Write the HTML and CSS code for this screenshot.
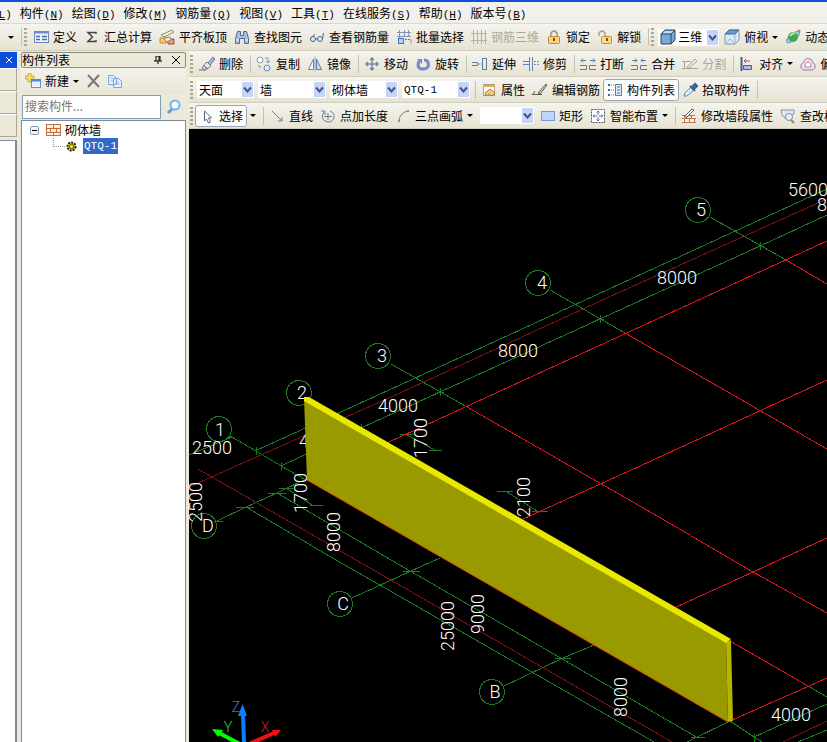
FILE: index.html
```
<!DOCTYPE html>
<html lang="zh-CN">
<head>
    <meta charset="UTF-8">
    <meta name="viewport" content="width=device-width, initial-scale=1.0">
    <title>构件列表</title>
    <link rel="stylesheet" href="styles.css">
</head>
<body>

<nav class="menubar">
    <button class="menu"><span class="key">(<u>L</u>)</span></button>
    <button class="menu">构件<span class="key">(<u>N</u>)</span></button>
    <button class="menu">绘图<span class="key">(<u>D</u>)</span></button>
    <button class="menu">修改<span class="key">(<u>M</u>)</span></button>
    <button class="menu">钢筋量<span class="key">(<u>Q</u>)</span></button>
    <button class="menu">视图<span class="key">(<u>V</u>)</span></button>
    <button class="menu">工具<span class="key">(<u>T</u>)</span></button>
    <button class="menu">在线服务<span class="key">(<u>S</u>)</span></button>
    <button class="menu">帮助<span class="key">(<u>H</u>)</span></button>
    <button class="menu">版本号<span class="key">(<u>B</u>)</span></button>
</nav>

<div class="toolbar main-bar">
    <button class="tool more" aria-label="更多"><span class="caret"></span></button>
    <span class="sep"></span>
    <span class="grip"></span>
    <button class="tool"><svg class="icon" viewBox="0 0 16 16"><rect x="1.500" y="2.500" width="14" height="11" fill="#eef3fc" stroke="#6c87b8"/><path d="M1 3.500h15" stroke="#6f8fcb" stroke-width="2"/><path d="M3 7.500h4M3 10.500h4M9 7.500h5M9 10.500h5" stroke="#4d6ea8" stroke-width="1.500"/></svg>定义</button>
    <button class="tool"><svg class="icon" viewBox="0 0 16 16"><path d="M12 5V3.500H4l4.500 4.500L4 12.500h8V11" fill="none" stroke="#444" stroke-width="1.500"/></svg>汇总计算</button>
    <button class="tool"><svg class="icon" viewBox="0 0 16 16"><path d="M2 6l11-5 2 2-10 5z" fill="#fff3c4" stroke="#8f8a78"/><path d="M1 9h6v5H1z" fill="#f5c96b" stroke="#c78a35"/><path d="M9 10h6v5H9z" fill="#e2a07c" stroke="#b4432f"/><path d="M5 9l6-1 1 3-5 2z" fill="#f7e7ba" stroke="#888"/></svg>平齐板顶</button>
    <button class="tool"><svg class="icon" viewBox="0 0 16 16"><path d="M3.500 2.500h3v4h3v-4h3l2 7v5h-4v-5h-5v5h-4v-5z" fill="#a9bfe2" stroke="#4a689d"/><path d="M2 11h3M11 11h3" stroke="#fff"/></svg>查找图元</button>
    <button class="tool"><svg class="icon" viewBox="0 0 16 16"><circle cx="4" cy="10" r="2.500" fill="#dce8f5" stroke="#51657f"/><circle cx="11" cy="10" r="2.500" fill="#dce8f5" stroke="#51657f"/><path d="M6.500 10h2M2 9l4-4M13.500 10l1-6" fill="none" stroke="#51657f"/></svg>查看钢筋量</button>
    <button class="tool"><svg class="icon" viewBox="0 0 16 16"><path d="M1 3.500h14M1 7.500h14M3.500 1v14M8.500 1v7" stroke="#8395b2"/><path d="M12.500 1v6" stroke="#8395b2"/><path d="M9 10.500h6v4" fill="none" stroke="#777" stroke-dasharray="2 1"/><rect x="2.500" y="9.500" width="5" height="5" fill="#b9d3f7" stroke="#3e70bd"/></svg>批量选择</button>
    <button class="tool off" disabled><svg class="icon" viewBox="0 0 16 16"><path d="M0 4.500h16M0 11.500h16M2.500 1v14M6.500 1v14M10.500 1v14M14.500 1v14" stroke="#b5b2a5"/></svg>钢筋三维</button>
    <button class="tool"><svg class="icon" viewBox="0 0 16 16"><path d="M5 7V4q3-4 6 0v3" fill="none" stroke="#9c9480" stroke-width="1.500"/><rect x="2.500" y="7.500" width="11" height="7" rx="1" fill="#fbd27b" stroke="#bf8c32"/><path d="M8 9v3" stroke="#76531b" stroke-width="2"/></svg>锁定</button>
    <button class="tool"><svg class="icon" viewBox="0 0 16 16"><path d="M2 7V4q3-4 6 0v3" fill="none" stroke="#aaa087" stroke-width="1.500"/><rect x="4.500" y="7.500" width="10" height="7" rx="1" fill="#fbd98d" stroke="#bf8c32"/><path d="M10 9v3" stroke="#76531b" stroke-width="2"/></svg>解锁</button>
    <span class="sep"></span>
    <span class="grip"></span>
    <span class="combo view-combo">
        <svg class="icon" viewBox="0 0 16 16"><path d="M1 5l4-4h10v10l-4 4H1z" fill="#79abd9" stroke="#28435f"/><path d="M2 5l3-3h9l-3 3z" fill="#bddcf5"/><path d="M1 5h10v10M11 5l4-4" fill="none" stroke="#28435f"/></svg>
        <select aria-label="视图"><option>三维</option></select>
        <svg class="drop" viewBox="0 0 11 14"><path d="M2 5l3.500 4L9 5" /></svg>
    </span>
    <button class="tool"><svg class="icon" viewBox="0 0 16 16"><path d="M1 5l4-4h10v10l-4 4H1z" fill="#dbe9f5" stroke="#8298ae"/><path d="M1 5l4-4h10l-4 4z" fill="#5d9bd1" stroke="#426a91"/><path d="M11 5v10M1 15l5-5 5 5" fill="none" stroke="#9bb1c5"/></svg>俯视<span class="caret"></span></button>
    <button class="tool"><svg class="icon" viewBox="0 0 16 16"><ellipse cx="8" cy="8" rx="8" ry="3" transform="rotate(-40 8 8)" fill="#a7d4ef" stroke="#6b9fc5"/><circle cx="8" cy="8" r="5" fill="#43a64d"/><path d="M5 7q3-4 5-2" stroke="#b2edac" fill="none" stroke-width="2"/><circle cx="14" cy="2" r="1.500" fill="#de7548"/></svg>动态观察</button>
</div>

<div class="workspace">
    <aside class="side-strip">
        <div class="strip-title"><button aria-label="关闭导航"><svg viewBox="0 0 8 8"><path d="M1 1l6 6M7 1l-6 6" stroke="#fff"/></svg></button></div>
        <div class="strip-item"></div>
        <div class="strip-item"></div>
        <div class="strip-item"></div>
        <div class="strip-body"></div>
    </aside>

    <aside class="panel">
        <header class="panel-title">
            <h1>构件列表</h1>
            <button aria-label="固定"><svg viewBox="0 0 8 8"><path d="M2 0h4v5M2 0v5M0 5h8M4 5v3" fill="none" stroke="#000"/><path d="M5 0v5" stroke="#000"/></svg></button>
            <button aria-label="关闭"><svg viewBox="0 0 8 8"><path d="M0 0l8 8M8 0l-8 8" stroke="#000"/></svg></button>
        </header>
        <div class="panel-tools">
            <button class="tool"><svg class="icon" viewBox="0 0 16 16"><rect x="6.500" y="6.500" width="9" height="8" fill="#eaf1fd" stroke="#6d8cc2"/><path d="M6 7.500h10" stroke="#5585d6" stroke-width="2"/><path d="M3 0h3v3h3v3H6v3H3V6H0V3h3z" fill="#f6df62" stroke="#b29a39" stroke-width=".7"/></svg>新建<span class="caret"></span></button>
            <button class="tool" aria-label="删除构件"><svg class="icon" viewBox="0 0 16 16"><path d="M3 2l11 12M14 2L3 14" stroke="#777" stroke-width="2"/></svg></button>
            <button class="tool" aria-label="复制构件"><svg class="icon" viewBox="0 0 16 16"><path d="M1.500 2.500h5l3 3v6h-8zM6.500 5.500h5l3 3v6h-8z" fill="#e9f2ff" stroke="#7ca2d8"/><path d="M8 9h4M8 11h5M3 5h3M3 8h3" stroke="#9abae7"/></svg></button>
        </div>
        <div class="search">
            <input type="text" placeholder="搜索构件..." aria-label="搜索构件">
            <button aria-label="搜索"><svg class="icon" viewBox="0 0 16 16"><path d="M6 10l-4 4" stroke="#609edc" stroke-width="3"/><circle cx="9" cy="6" r="4.500" fill="#f6fcff" stroke="#70b6ed" stroke-width="2"/></svg></button>
        </div>
        <div class="tree">
            <div class="node">
                <svg class="box" viewBox="0 0 9 9"><rect x=".5" y=".5" width="8" height="8" rx="1" fill="#f5f3ed" stroke="#7b98b5"/><path d="M2 4.500h5" stroke="#000"/></svg>
                <svg class="icon" viewBox="0 0 16 16"><rect x="1" y="2" width="15" height="12" fill="#fff0dc"/><path d="M1 2.500h15M1 6.500h15M1 10.500h15M1 13.500h15M1.500 2v12M8.500 2v4M5.500 6v4M11.500 6v4M8.500 10v4M15.500 2v12" stroke="#c66d3e"/></svg>
                <span>砌体墙</span>
            </div>
            <div class="node child">
                <span class="branch"></span>
                <svg class="gear" viewBox="0 0 11 11"><circle cx="5.500" cy="5.500" r="4" fill="#f5df20" stroke="#222" stroke-width="2" stroke-dasharray="2 1"/><circle cx="5.500" cy="5.500" r="2" fill="#ffef45" stroke="#4d4300"/></svg>
                <span class="picked">QTQ-1</span>
            </div>
        </div>
    </aside>

    <main class="work">
        <div class="toolbar">
            <span class="grip"></span>
            <button class="tool"><svg class="icon" viewBox="0 0 16 16"><path d="M9 7l5-6 2 2-5 6z" fill="#adb9d8" stroke="#687798"/><path d="M5 9l3-3 4 4-4 3q-4 1-5-1z" fill="#e9e6ec" stroke="#86758e"/><path d="M5 10l4 3" stroke="#9c3945"/><path d="M0 14h7" stroke="#666"/></svg>删除</button>
            <span class="sep"></span>
            <button class="tool"><svg class="icon" viewBox="0 0 16 16"><circle cx="4" cy="4" r="3" fill="#f7f9fb" stroke="#8997aa"/><circle cx="11" cy="12" r="3" fill="#dce8fa" stroke="#6f8dbc"/><path d="M9 2h3v4M10 5l2 2 2-2M3 9v2h2" fill="none" stroke="#8494ad"/></svg>复制</button>
            <button class="tool"><svg class="icon" viewBox="0 0 16 16"><path d="M1.500 13.500L6.500 3v10.500z" fill="#f5f7fa" stroke="#7187a6"/><path d="M9.500 3v10.500h5z" fill="#c9dbf4" stroke="#587bac"/><path d="M8 1v14" stroke="#89a"/></svg>镜像</button>
            <span class="sep"></span>
            <button class="tool"><svg class="icon" viewBox="0 0 16 16"><path d="M8 2v12M2 8h12M6 4l2-2 2 2M6 12l2 2 2-2M4 6L2 8l2 2M12 6l2 2-2 2" fill="none" stroke="#7387a2" stroke-width="1.500"/></svg>移动</button>
            <button class="tool"><svg class="icon" viewBox="0 0 16 16"><path d="M4 5q-3 8 4 8 7 0 5-7-1-2-4-2" fill="none" stroke="#7289d0" stroke-width="3"/><path d="M2 3h5v5z" fill="#7289d0"/></svg>旋转</button>
            <span class="sep"></span>
            <button class="tool"><svg class="icon" viewBox="0 0 16 16"><path d="M0 6.500h5.500v3H0M10.500 2v12M14.500 2v12M10 2.500h5M10 13.500h5" fill="none" stroke="#5f7ea9"/><path d="M6 8h4" stroke="#6b91cd" stroke-dasharray="2 1"/></svg>延伸</button>
            <button class="tool"><svg class="icon" viewBox="0 0 16 16"><path d="M0 5.500h6M0 8.500h6M6.500 1v14M9.500 1v14" stroke="#5f84b8"/><path d="M11 5.500h5M11 8.500h5" stroke="#88a" stroke-dasharray="2 1"/></svg>修剪</button>
            <span class="sep"></span>
            <button class="tool"><svg class="icon" viewBox="0 0 16 16"><path d="M1 4.500h5M3 2.500l-2 2 2 2M10 4.500h5M13 2.500l2 2-2 2M0 9.500h6.500v4H0M16 9.500H9.500v4H16" fill="none" stroke="#617aa1"/></svg>打断</button>
            <button class="tool"><svg class="icon" viewBox="0 0 16 16"><path d="M1 4.500h5M4 2.500l2 2-2 2M10 4.500h5M12 2.500l-2 2 2 2M0 9.500h6.500v4H0M16 9.500H9.500v4H16" fill="none" stroke="#617aa1"/></svg>合并</button>
            <button class="tool off" disabled><svg class="icon" viewBox="0 0 16 16"><path d="M0 5.500h9M0 12.500h16M5 11l8-8 2 2-8 7zM2.500 6v6" fill="none" stroke="#aaa799"/></svg>分割</button>
            <span class="sep"></span>
            <button class="tool"><svg class="icon" viewBox="0 0 16 16"><path d="M2.500 1v14" stroke="#455f96" stroke-width="2"/><path d="M4.500 9.500h8v4h-8z" stroke="#455f96" fill="#a9bce5"/><path d="M5 5h6M7 3L5 5l2 2" fill="none" stroke="#b9475f"/></svg>对齐<span class="caret"></span></button>
            <button class="tool"><svg class="icon" viewBox="0 0 16 16"><path d="M4 6q1-5 6-3 3 1 3 4 3 1 2 5-1 2-4 2H4q-4-1-3-5 1-2 3-3z" fill="#f2e0e6" stroke="#8d7eae"/><path d="M5 11q0-5 3-5t3 5z" fill="#fff" stroke="#ca7285"/></svg>偏移</button>
        </div>

        <div class="toolbar">
            <span class="grip"></span>
            <div class="combos">
                <span class="combo narrow"><select aria-label="楼层"><option>天面</option></select><svg class="drop" viewBox="0 0 11 14"><path d="M2 5l3.500 4L9 5"/></svg></span>
                <span class="combo"><select aria-label="构件类型"><option>墙</option></select><svg class="drop" viewBox="0 0 11 14"><path d="M2 5l3.500 4L9 5"/></svg></span>
                <span class="combo"><select aria-label="构件种类"><option>砌体墙</option></select><svg class="drop" viewBox="0 0 11 14"><path d="M2 5l3.500 4L9 5"/></svg></span>
                <span class="combo"><select class="code" aria-label="构件名称"><option>QTQ-1</option></select><svg class="drop" viewBox="0 0 11 14"><path d="M2 5l3.500 4L9 5"/></svg></span>
            </div>
            <span class="sep"></span>
            <button class="tool"><svg class="icon" viewBox="0 0 16 16"><rect x="2.500" y="2.500" width="11" height="11" fill="#fff" stroke="#aaa18c"/><path d="M2 4h12" stroke="#e5ac4d" stroke-width="2"/><path d="M4 11l5-4 5 4-3 3-3-2-3 2z" fill="#f6cf82" stroke="#a67b35"/></svg>属性</button>
            <button class="tool"><svg class="icon" viewBox="0 0 16 16"><path d="M0 12.500h10M6 11l8-9 1 1-7 9z" fill="#d4cbb5" stroke="#645c4d"/><path d="M3 9l-2 3" fill="none" stroke="#645c4d"/></svg>编辑钢筋</button>
            <button class="tool pressed"><svg class="icon" viewBox="0 0 16 16"><path d="M1 3h2M1 8h2M1 13h2" stroke="#3865a6" stroke-width="2"/><path d="M4 3h4M4 8h3M4 13h4" stroke="#777" stroke-dasharray="1 1"/><rect x="8.500" y="2.500" width="6" height="11" fill="#e4eefb" stroke="#5a7fb8"/><path d="M10 5h3M10 8h3M10 11h3" stroke="#496b9d"/></svg>构件列表</button>
            <button class="tool"><svg class="icon" viewBox="0 0 16 16"><path d="M2 14l1-3 6-6 3 3-7 6z" fill="#d9ecfa" stroke="#6489ae"/><path d="M8 4l5 5M10 5l3-3 2 2-3 3z" stroke="#355f95" stroke-width="2" fill="#517fb9"/></svg>拾取构件</button>
            <span class="sep"></span>
        </div>

        <div class="toolbar">
            <span class="grip"></span>
            <button class="tool pressed"><svg class="icon" viewBox="0 0 16 16"><path d="M5.500 3v10l2-2 2 4 2-1-2-4h3z" fill="#fff" stroke="#596579"/></svg>选择</button>
            <button class="tool" aria-label="选择方式"><span class="caret"></span></button>
            <span class="sep"></span>
            <button class="tool"><svg class="icon" viewBox="0 0 16 16"><path d="M3 3l10 10M13 9v4H9" fill="none" stroke="#6680a1"/></svg>直线</button>
            <button class="tool"><svg class="icon" viewBox="0 0 16 16"><path d="M4 4q-4 6 1 9 6 3 9-3 1-5-4-7M1 3h4v4M8 5v7M4 8.500h8" fill="none" stroke="#6c7d91"/></svg>点加长度</button>
            <button class="tool"><svg class="icon" viewBox="0 0 16 16"><path d="M4 14q0-10 10-11" fill="none" stroke="#a57068"/><path d="M3 13h2M12 3h2" stroke="#b98078" stroke-width="2"/></svg>三点画弧<span class="caret"></span></button>
            <span class="combo empty"><select aria-label="画弧方式"><option></option></select><svg class="drop" viewBox="0 0 11 14"><path d="M2 5l3.500 4L9 5"/></svg></span>
            <button class="tool"><svg class="icon" viewBox="0 0 16 16"><rect x="2.500" y="3.500" width="13" height="9" fill="#bfd5fb" stroke="#7998cf"/></svg>矩形</button>
            <button class="tool"><svg class="icon" viewBox="0 0 16 16"><rect x="1.500" y="1.500" width="13" height="13" fill="#fff" stroke="#555" stroke-dasharray="2 1"/><path d="M8 3v4M8 9v4M3 8h4M9 8h4M6.500 4.500L8 3l1.500 1.500M6.500 11.500L8 13l1.500-1.500M4.500 6.500L3 8l1.500 1.500M11.500 6.500L13 8l-1.500 1.500" fill="none" stroke="#587398"/></svg>智能布置<span class="caret"></span></button>
            <span class="sep"></span>
            <button class="tool"><svg class="icon" viewBox="0 0 16 16"><path d="M1 7h13v8H1z" fill="#fff1dc"/><path d="M1 7.500h13M1 10.500h14M1 14.500h14M5.500 7v3M10.500 7v3M3.500 11v3M8.500 11v3M13.500 11v3" stroke="#c17857"/><path d="M3 9l8-8 2 1-7 7z" fill="#fff" stroke="#665f58"/></svg>修改墙段属性</button>
            <button class="tool"><svg class="icon" viewBox="0 0 16 16"><path d="M1 2h13v4l-4 1-4 4-4-4z" fill="#e3e8ef" stroke="#8393aa"/><circle cx="9" cy="9" r="3.500" fill="#e7f4ff" stroke="#6e8db3"/><path d="M11 12l3 3" stroke="#ad8151" stroke-width="2"/></svg>查改标注</button>
        </div>

        <svg class="scene" viewBox="189 129 638 613" preserveAspectRatio="xMinYMin slice">
            <!-- outer dimension frame -->
            <g class="faint">
                <path d="M189 487L400 393L620 292L827 199"/>
                <path d="M198 469L356 560L509 648L672 742M783 742L827 721"/>
            </g>
            <g class="axis">
                <path d="M255 451L400 385L620 284L827 189M189 455L232 437"/>
                <path d="M281 466L361 428L440 392L600 319L760 246L827 215"/>
                <path d="M246 507L336 560L509 659L654 742M798 742L827 730"/>
                <path d="M277 493L391 560L509 628L698 738M754 737L827 704"/>
                <path d="M710 217L786 260M550 290L625 333M391 364L467 407M311 400L390 445M230 436L256 451L281 466L306 480"/>
                <path d="M217 521L246 507L277 493L310 477M352 598L411 571L440 558M504 686L563 658L594 645M687 742L728 722M730 721L754 737L762 742M808 686L827 697"/>
                <path d="M236 507.500h18M268 493.500h18M279 488.500h14M403 571.500h17M555 658.500h16M691 737.500h14M214 521.500h9"/>
                <path d="M286 488L312 505M310 505.500h13M400 434.500h13M407 435L435 450M429 450.500h13M497 491.500h16M507 492L537 511M532 511.500h16"/>
                <path d="M760.500 242v8M757 246.500h7M600.500 315v8M597 319.500h7M440.500 388v8M437 392.500h7M361.500 424v8M256.500 447v8M281.500 462v8M754.500 734v8"/>
                <circle cx="698" cy="210" r="12.500"/>
                <circle cx="538" cy="283" r="12.500"/>
                <circle cx="378" cy="356" r="12.500"/>
                <circle cx="299" cy="393" r="12.500"/>
                <circle cx="219" cy="429" r="12.500"/>
                <circle cx="204" cy="526" r="12.500"/>
                <circle cx="340" cy="604" r="12.500"/>
                <circle cx="492" cy="692" r="12.500"/>
            </g>
            <g class="grid">
                <path d="M306 480L389 442L655 320L827 241M523 519L640 466L827 380M674 608L753 572L827 538M730 721L827 678"/>
                <path d="M786 260L827 284M625 333L827 449M467 407L640 506L753 572L827 613M730 641L808 686"/>
            </g>
            <g class="label">
                <text x="701" y="216">5</text>
                <text x="542" y="289">4</text>
                <text x="382" y="362">3</text>
                <text x="302" y="399">2</text>
                <text x="220" y="436">1</text>
                <text x="208" y="532">D</text>
                <text x="343" y="610">C</text>
                <text x="495" y="698">B</text>
                <text x="808" y="196">5600</text>
                <text x="837" y="211">8000</text>
                <text x="677" y="284">8000</text>
                <text x="518" y="357">8000</text>
                <text x="398" y="412">4000</text>
                <text x="319" y="447">4000</text>
                <text x="212" y="454">2500</text>
                <text x="791" y="721">4000</text>
                <text transform="translate(202 502) rotate(-90)">2500</text>
                <text transform="translate(307 493) rotate(-90)">1700</text>
                <text transform="translate(340 532) rotate(-90)">8000</text>
                <text transform="translate(427 438) rotate(-90)">1700</text>
                <text transform="translate(530 497) rotate(-90)">2100</text>
                <text transform="translate(454 626) rotate(-90)">25000</text>
                <text transform="translate(484 614) rotate(-90)">9000</text>
                <text transform="translate(627 697) rotate(-90)">8000</text>
            </g>
            <!-- wall QTQ-1 -->
            <path d="M304 398L307 480L728 722L726 641z" fill="#999900"/>
            <path d="M307 480L728 722" stroke="#dc4a00"/>
            <path d="M726 642L731 640L733 721L728 722z" fill="#b5b500"/>
            <path d="M304 397H309L731 639L726 643L304 401z" fill="#e8e800"/>
            <!-- coordinate tripod -->
            <g stroke-width="4">
                <path d="M244 742L243 714" stroke="#0a80ff"/>
                <path d="M238 716L242.500 704L247 716z" fill="#0a80ff"/>
                <path d="M240 744L219 733" stroke="#0f0"/>
                <path d="M212 729L223 730L218 737z" fill="#0f0"/>
                <path d="M249 744L274 733" stroke="#f01010"/>
                <path d="M281 730L272 730L275 737z" fill="#f01010"/>
            </g>
            <g class="tripod">
                <text x="236" y="712" fill="#2d7fe0">Z</text>
                <text x="228" y="732" fill="#35d835">Y</text>
                <text x="265" y="732" fill="#d02020">X</text>
            </g>
        </svg>
    </main>
</div>

</body>
</html>
```
FILE: styles.css
```
* {
    box-sizing: border-box;
}

body {
    margin: 0;
    height: 100vh;
    overflow: hidden;
    display: flex;
    flex-direction: column;
    font-family: "Noto Sans CJK SC", sans-serif;
    font-size: 12px;
    line-height: 16px;
    color: #000;
    background-color: #ece9d8;
    border-top: 2px solid #0a50dc;
}

button, input, select {
    font: inherit;
    color: inherit;
    margin: 0;
    padding: 0;
    border: 0;
    background: none;
}

button {
    white-space: nowrap;
}

/* menu */
.menubar {
    flex: none;
    height: 22px;
    display: flex;
    align-items: center;
    gap: 8px;
    margin-left: -8px;
    padding: 2px 8px 0 0;
    background-color: #f1f0ea;
    border-bottom: 1px solid #dcd8c8;
}

.key {
    font-family: "Liberation Mono", monospace;
    font-size: 11px;
}

/* toolbars */
.toolbar {
    flex: none;
    height: 26px;
    display: flex;
    align-items: center;
    gap: 7px;
    padding-left: 1px;
    overflow: hidden;
    background: linear-gradient(#f5f4ee, #e6e3d3);
    border-bottom: 1px solid #d3cfbf;
}

.main-bar {
    height: 27px;
}

.toolbar > * {
    flex: none;
}

.tool {
    display: flex;
    align-items: center;
    gap: 4px;
}

.icon {
    flex: none;
    width: 16px;
    height: 16px;
}

.off {
    color: #aca899;
}

.pressed {
    height: 22px;
    margin: 0 -4px;
    padding: 0 3px;
    background-color: #fcfcfb;
    border: 1px solid #98a6ba;
    border-radius: 3px;
}

.caret {
    border: 3px solid transparent;
    border-top-color: #000;
    border-bottom: 0;
}

.more {
    padding-left: 7px;
}

.sep {
    width: 1px;
    height: 18px;
    margin-right: -2px;
    background-color: #c5c2b3;
}

.grip {
    width: 3px;
    height: 18px;
    margin-right: -1px;
    background: repeating-linear-gradient(#aaa793 0 2px, transparent 2px 4px);
}

.main-bar .sep {
    margin-right: -5px;
}

.combos {
    display: flex;
    gap: 4px;
    margin: 0 -2px 0 -2px;
}

.combo {
    position: relative;
    width: 68px;
    height: 17px;
    display: flex;
    align-items: center;
    background-color: #fff;
}

.narrow {
    width: 57px;
}

.empty {
    width: 54px;
    margin-right: -2px;
}

.view-combo {
    width: 61px;
    padding-left: 2px;
    margin: 0 -2px;
}

.combo select {
    flex: 1;
    min-width: 0;
    height: 17px;
    line-height: 16px;
    padding-left: 2px;
    appearance: none;
    outline: 0;
}

.combo .code {
    font-family: "Liberation Mono", monospace;
    font-size: 11px;
}

.drop {
    position: absolute;
    right: 1px;
    top: 1px;
    width: 11px;
    height: 15px;
    background-color: #c3d3fa;
    border-radius: 1px;
    pointer-events: none;
}

.drop path {
    fill: none;
    stroke: #42567c;
    stroke-width: 2;
}

/* workspace */
.workspace {
    flex: 1;
    min-height: 0;
    display: flex;
}

.side-strip {
    flex: none;
    width: 17px;
    margin-right: 4px;
    display: flex;
    flex-direction: column;
}

.strip-title {
    height: 16px;
    margin-top: 1px;
    display: flex;
    justify-content: center;
    align-items: center;
    background-color: #0a50dc;
}

.strip-title button {
    display: flex;
}

.strip-title svg, .panel-title svg {
    width: 8px;
    height: 8px;
}

.strip-item {
    height: 23px;
    background-color: #ece9d8;
    border: 1px solid #aaa798;
    border-top-color: #fff;
    border-left: 0;
}

.strip-body {
    flex: 1;
    margin-top: 3px;
    background-color: #fff;
    border: 1px solid #7f8d9b;
    border-width: 1px 2px 0 0;
}

.panel {
    flex: none;
    width: 165px;
    margin-right: 3px;
    display: flex;
    flex-direction: column;
}

.panel-title {
    height: 16px;
    margin-top: 1px;
    display: flex;
    align-items: center;
    gap: 10px;
    padding-right: 5px;
    border: 1px solid #8f8c80;
    border-radius: 2px;
}

.panel-title h1 {
    flex: 1;
    margin: 0;
    font-size: 12px;
    font-weight: normal;
    line-height: 14px;
}

.panel-title button {
    display: flex;
}

.panel-tools {
    height: 26px;
    display: flex;
    align-items: center;
    gap: 6px;
    padding-left: 4px;
    background: linear-gradient(#f3f2eb, #e9e6d8);
}

.search {
    height: 26px;
    display: flex;
    align-items: center;
    padding-left: 1px;
}

.search input {
    flex: 1;
    min-width: 0;
    height: 24px;
    padding: 0 2px 4px;
    background-color: #fff;
    border: 1px solid #7f9db9;
}

.search input::placeholder {
    color: #777;
}

.search button {
    width: 25px;
    height: 24px;
    display: flex;
    align-items: center;
    justify-content: center;
}

.tree {
    flex: 1;
    padding: 1px 0 0 8px;
    background-color: #fff;
    border: 1px solid #7f8d9b;
    border-bottom: 0;
}

.node {
    display: flex;
    align-items: center;
    height: 16px;
}

.node .icon {
    margin: 0 4px 0 6px;
}

.box {
    width: 9px;
    height: 9px;
}

.child {
    padding-left: 23px;
}

.branch {
    width: 12px;
    height: 9px;
    margin-bottom: 8px;
    border: 1px dotted #999;
    border-width: 0 0 1px 1px;
}

.gear {
    width: 11px;
    height: 11px;
    margin: 0 6px 0 1px;
}

.picked {
    padding: 0 1px;
    color: #fff;
    background-color: #316ac5;
    font-family: "Liberation Mono", monospace;
    font-size: 11px;
}

.work {
    flex: 1;
    min-width: 0;
    display: flex;
    flex-direction: column;
}

/* drawing area */
.scene {
    flex: 1;
    min-height: 0;
    width: 100%;
    background-color: #000;
}

.axis, .grid, .faint {
    fill: none;
    shape-rendering: crispEdges;
}

.axis {
    stroke: #1c7a22;
}

.grid {
    stroke: #d8141c;
}

.faint {
    stroke: #7d0f10;
}

.label, .tripod {
    font-family: Roboto, sans-serif;
    font-size: 18px;
    font-weight: 300;
    text-anchor: middle;
}

.label {
    fill: #fff;
}

.tripod {
    font-size: 14px;
}
```
